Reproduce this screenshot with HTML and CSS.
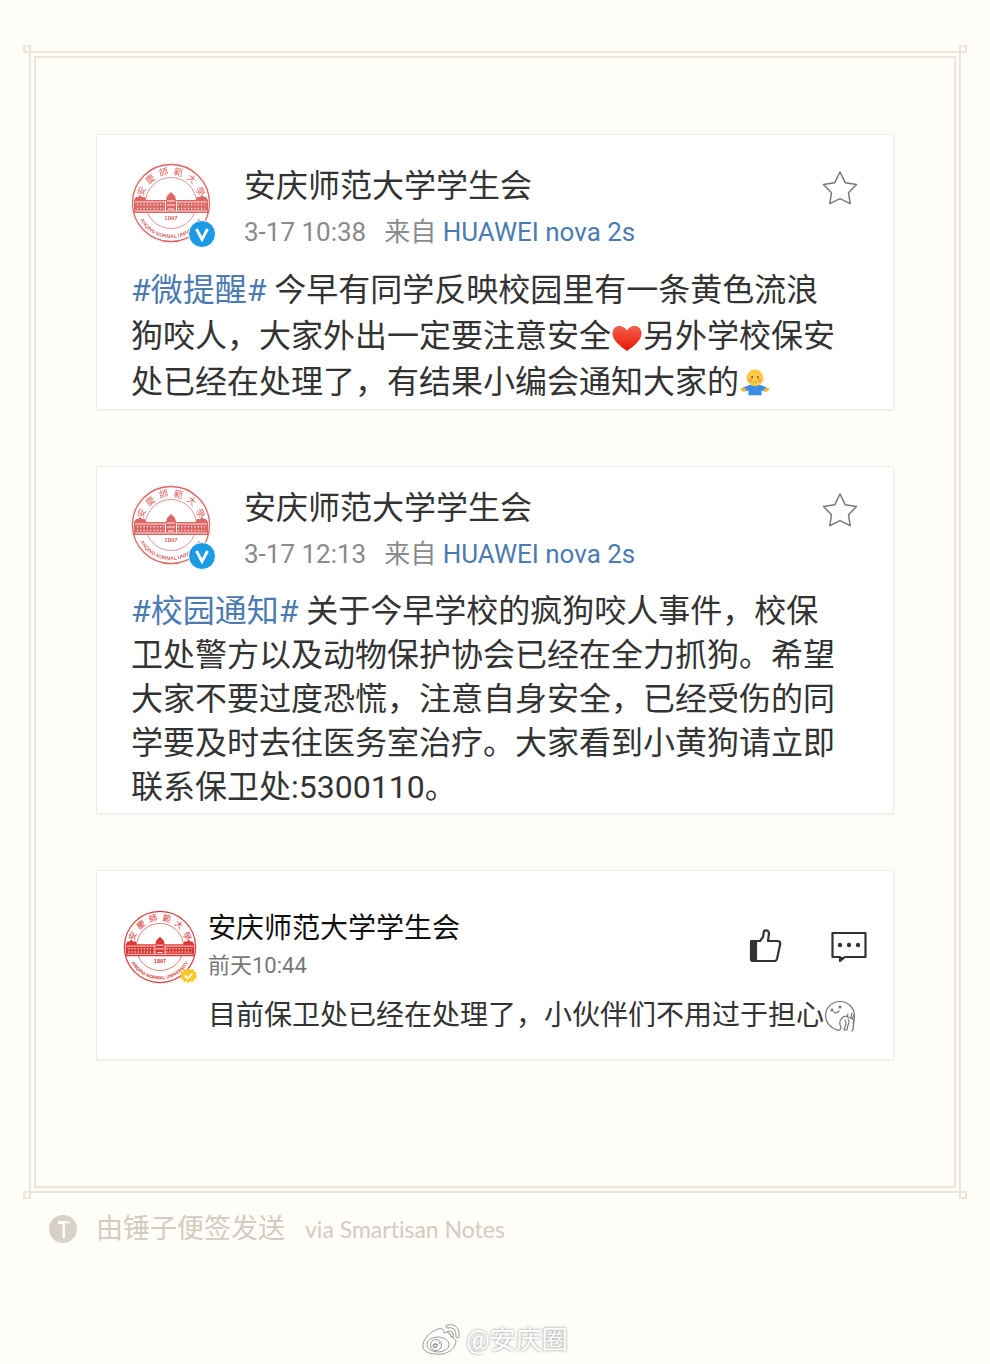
FILE: index.html
```html
<!DOCTYPE html>
<html lang="zh-CN">
<head>
<meta charset="utf-8">
<meta name="viewport" content="width=device-width, initial-scale=1">
<title>安庆师范大学学生会</title>
<link rel="stylesheet" href="styles.css">
</head>
<body>
<svg class="defs" aria-hidden="true">
  <defs>
    <path id="arc-top" d="M-28.500 0A28.500 28.500 0 0 1 28.500 0"/>
    <path id="arc-bottom" d="M-35 0A35 35 0 0 0 35 0"/>
    <symbol id="seal" viewBox="-40 -40 80 80">
      <circle r="39.5" fill="#fff"/>
      <circle r="38.500" fill="none" stroke="currentColor" stroke-width="1.3"/>
      <circle r="25.5" fill="none" stroke="currentColor" stroke-width=".7"/>
      <text class="seal-cn"><textPath href="#arc-top" startOffset="50%" text-anchor="middle">安&#8194;慶&#8194;師&#8194;範&#8194;大&#8194;學</textPath></text>
      <path d="M-37 -3l2-3h2l2-2 2 2h3l1 3h20l1-4 4-4 4 4 1 4h20l1-3h3l2-2 2 2h2l2 3V10h-74z" fill="currentColor"/>
      <path d="M-36 -1h30M6 -1h30M-36 8h72" stroke="#fff" stroke-width=".8"/>
      <path d="M-34 1.800h27M7 1.800h27M-34 5.500h27M7 5.500h27" stroke="#fff" stroke-width="1.600" stroke-dasharray="1 2.300"/>
      <path d="M-4 -2h8M-4 2h8M-3 6h6M-5.500 -2v10M5.500 -2v10" stroke="#fff" stroke-width=".9"/>
      <text class="seal-en"><textPath href="#arc-bottom" startOffset="50%" text-anchor="middle">ANQING NORMAL UNIVERSITY</textPath></text>
      <text class="seal-year" y="17" text-anchor="middle">1897</text>
    </symbol>
    <symbol id="star" viewBox="0 0 36 36">
      <path d="M18 2l5.200 10.700L34.500 14.500l-8 8.200 1.700 11L18 28.700 7.800 33.700l1.700-11-8-8.200L12.800 12.700z" fill="none" stroke="#777" stroke-width="1.500" stroke-linejoin="round"/>
    </symbol>
    <symbol id="vip" viewBox="0 0 28 28">
      <circle cx="14" cy="14" r="13.500" fill="#1b9be6" stroke="#fff"/>
      <path d="M8.500 9l5.500 10.500L19.500 9" fill="none" stroke="#fff" stroke-width="2.800"/>
    </symbol>
  </defs>
</svg>

<main class="frame">
  <i class="corner corner-tl"></i><i class="corner corner-tr"></i><i class="corner corner-bl"></i><i class="corner corner-br"></i>
  <div class="paper">
    <article class="card post">
      <header class="head">
        <div class="avatar"><svg class="seal seal-soft"><use href="#seal"/></svg><svg class="vip"><use href="#vip"/></svg></div>
        <div class="who">
          <h2 class="name">安庆师范大学学生会</h2>
          <p class="meta"><time>3-17 10:38</time><span>来自 <a href="#">HUAWEI nova 2s</a></span></p>
        </div>
        <button class="icon-button star" aria-label="收藏"><svg><use href="#star"/></svg></button>
      </header>
      <p class="text"><a href="#">#微提醒#</a> 今早有同学反映校园里有一条黄色流浪<br>狗咬人，大家外出一定要注意安全<svg class="emoji" viewBox="0 0 32 32" role="img" aria-label="心">
        <defs><linearGradient id="red" x2="0" y2="1"><stop stop-color="#f0604a"/><stop offset=".5" stop-color="#ef3b26"/><stop offset="1" stop-color="#df1709"/></linearGradient></defs>
        <path d="M16 29C9 24 1.500 18.500 1.500 11.500 1.500 2.500 12 1.500 16 8.500 20 1.500 30.500 2.500 30.500 11.500 30.500 18.500 23 24 16 29z" fill="url(#red)"/></svg>另外学校保安<br>处已经在处理了，有结果小编会通知大家的<svg class="emoji" viewBox="-1 1 34 34" role="img" aria-label="摊手">
        <path d="M10 19q6-2 12 0l7 3-2 4-4-1v5H9v-5l-4 1-2-4z" fill="#3b8de6"/>
        <path d="M5 26q-2 1-3-1-2-1-1-3l3 1 1-1 2 2zM27 26q2 1 3-1 2-1 1-3l-3 1-1-1-2 2z" fill="#f3bd37"/>
        <circle cx="16" cy="11.500" r="9" fill="#f9cc47"/>
        <circle cx="11" cy="14" r="2" fill="#f8a348"/><circle cx="21" cy="14" r="2" fill="#f8a348"/>
        <path d="M13 9.500v2.500M19 9.500v2.500" stroke="#885322" stroke-width="1.500"/><path d="M14 16h4" stroke="#e09a32"/></svg></p>
    </article>

    <article class="card post post-long">
      <header class="head">
        <div class="avatar"><svg class="seal seal-soft"><use href="#seal"/></svg><svg class="vip"><use href="#vip"/></svg></div>
        <div class="who">
          <h2 class="name">安庆师范大学学生会</h2>
          <p class="meta"><time>3-17 12:13</time><span>来自 <a href="#">HUAWEI nova 2s</a></span></p>
        </div>
        <button class="icon-button star" aria-label="收藏"><svg><use href="#star"/></svg></button>
      </header>
      <p class="text"><a href="#">#校园通知#</a> 关于今早学校的疯狗咬人事件，校保<br>卫处警方以及动物保护协会已经在全力抓狗。希望<br>大家不要过度恐慌，注意自身安全，已经受伤的同<br>学要及时去往医务室治疗。大家看到小黄狗请立即<br>联系保卫处:5300110。</p>
    </article>

    <article class="card comment">
      <header class="head">
        <div class="avatar"><svg class="seal"><use href="#seal"/></svg>
          <svg class="check" viewBox="0 0 18 18"><path d="M9 1l2 2 3-1 1 3 3 1-1 3 1 3-3 1-1 3-3-1-2 2-2-2-3 1-1-3-3-1 1-3-1-3 3-1 1-3 3 1z" fill="#fbc927"/><path d="M5 9l3 3 5-5" fill="none" stroke="#fff" stroke-width="2"/></svg></div>
        <div class="who">
          <h2 class="name">安庆师范大学学生会</h2>
          <p class="meta"><time>前天10:44</time></p>
        </div>
        <div class="actions">
          <button class="icon-button" aria-label="赞"><svg viewBox="0 0 36 36" fill="none" stroke="#333" stroke-width="2.200" stroke-linejoin="round"><path d="M3 13h9l3-4 1-6q4-2 5 2l-1 8h9q4 0 3 4l-3 14q-.5 2-3 2H5q-2 0-2-2V15q0-2 2-2z"/><path d="M3 14h5v18H4z" fill="#333"/></svg></button>
          <button class="icon-button" aria-label="评论"><svg viewBox="0 0 36 36" fill="none" stroke="#333" stroke-width="2.200" stroke-linejoin="round"><path d="M1.500 5h33v24H14l-5 4v-4H1.500z"/><path d="M8 29h6l-5 4z" fill="#333" stroke="none"/><g fill="#333" stroke="none"><circle cx="9" cy="17" r="2.200"/><circle cx="18" cy="17" r="2.200"/><circle cx="27" cy="17" r="2.200"/></g></svg></button>
        </div>
      </header>
      <p class="text">目前保卫处已经在处理了，小伙伴们不用过于担心<svg class="emoji" viewBox="0 0 32 32" role="img" aria-label="偷笑" fill="none" stroke="#777" stroke-width="1.200" stroke-linecap="round">
        <path d="M13 30C6 28 1.500 22 1.500 15.500 1.500 8 8 1.500 16 1.500S30.500 8 30.500 16c0 3-.5 5-1.500 7"/>
        <path d="M13 30q4 1 4-3-3-5 1-9 3-3 6-1l5 2q2 4 0 7 1 3-1 5M21 20q2 3 0 7l-1 3h3l1-5q2-3 0-6M24 14l-1 3M28 13l-1 4M30 15l-2 4"/><path d="M10 12q2 2 5-1"/><circle cx="8" cy="10" r=".9" fill="#333"/><circle cx="16" cy="7" r=".9" fill="#333"/></svg></p>
    </article>
  </div>
</main>

<footer class="credit">
  <svg class="credit-logo" viewBox="0 0 28 28"><circle cx="14" cy="14" r="14" fill="#d9d0c7"/><path d="M9 6h7q4 0 5 3-2-1-5-1v15q-1 1-2.500 0V9H9z" fill="#fffdf8"/></svg>
  <span class="credit-cn">由锤子便签发送</span>
  <span class="credit-en">via Smartisan Notes</span>
</footer>

<div class="watermark">
  <svg class="weibo" viewBox="0 0 38 34" fill="#fff" stroke="#999" stroke-width="1"><path d="M12 8q8-5 10 0v2q8-3 9 1l-1 3q6 3 3 8c-3 7-11 10-19 9C4 31 0 26 1 21 2 16 7 10 12 8z"/><ellipse cx="16" cy="21.500" rx="11" ry="7.500"/><circle cx="14" cy="22" r="5.500"/><path d="M12 24q-2-2 1-3 3 0 2 2-1 2-3 1zM17 20h1" stroke-width="1.500"/><path d="M25 2q10-2 12 7v5q-1 2-3 0 1-11-9-9-2-1 0-3z"/><path d="M26 8q6 0 5 6h-2q0-4-3-4-1-1 0-2z"/></svg>
  <span>@安庆圈</span>
</div>
</body>
</html>
```

FILE: styles.css
```css
* { box-sizing: border-box; }

body {
  margin: 0;
  padding: 51px 29px 0;
  background: #fffdf8;
  color: #333;
  font-family: Roboto, "Noto Sans CJK SC", sans-serif;
}

h2, p { margin: 0; font-weight: 400; }
a { color: #4b7bb0; text-decoration: none; }
svg { display: block; }

.defs { position: absolute; width: 0; height: 0; }

/* Double-ruled border with small squares at the corners */
.frame {
  position: relative;
  padding: 3px;
  border: 2px solid #ece5da;
}

.paper {
  display: flex;
  flex-direction: column;
  gap: 56px;
  padding: 76px 60px 126px;
  border: 2px solid #ece5da;
}

.corner {
  position: absolute;
  width: 8px;
  height: 8px;
  border: 2px solid #ece5da;
}
.corner-tl { top: -8px; left: -8px; }
.corner-tr { top: -8px; right: -8px; }
.corner-bl { bottom: -8px; left: -8px; }
.corner-br { bottom: -8px; right: -8px; }

.card {
  background: #fff;
  border: 1px solid #eeece7;
  border-radius: 2px;
  box-shadow: 0 1px 2px rgba(0, 0, 0, .06);
}

.head { display: flex; align-items: flex-start; }
.who { flex: 1; }

.avatar { position: relative; flex: none; }
.seal { width: 100%; height: 100%; color: #d93a36; overflow: visible; }
.seal-soft { color: #dc6764; filter: drop-shadow(0 0 1px #ddd); }
.seal-cn { font: 9px "Noto Sans CJK TC", "Noto Sans CJK SC", sans-serif; fill: currentColor; }
.seal-en { font: 700 5px "Liberation Sans", sans-serif; fill: currentColor; }
.seal-year { font: 700 6px "Liberation Sans", sans-serif; fill: currentColor; }

.vip {
  position: absolute;
  right: -5px;
  bottom: -5px;
  width: 28px;
  height: 28px;
}
.check {
  position: absolute;
  right: 0;
  bottom: 0;
  width: 17px;
  height: 17px;
}

.icon-button {
  padding: 0;
  border: 0;
  background: none;
  cursor: pointer;
}
.icon-button svg { width: 36px; height: 36px; }

.emoji { display: inline-block; width: 32px; height: 32px; vertical-align: -7px; }

/* Feed posts */
.post { padding: 28px 35px 4px 34px; }
.post .head { gap: 33px; }
.post .avatar { width: 80px; height: 80px; }
.post .name { font-size: 32px; line-height: 46px; }
.post .meta {
  display: flex;
  gap: 18px;
  color: #8a8a8a;
  font-size: 26px;
  line-height: 46px;
}
.post .text { margin-top: 12px; font-size: 32px; line-height: 46px; }
.star { margin-top: 7px; }

.post-long { padding-top: 18px; }
.post-long .text { line-height: 44px; }

/* Reply */
.comment { padding: 39px 26px 23px; }
.comment .head { gap: 11px; }
.comment .avatar { width: 74px; height: 74px; }
.comment .name { color: #111; font-size: 28px; line-height: 37px; }
.comment .meta { color: #777; font-size: 22px; line-height: 37px; }
.comment .text { margin: 12px 0 0 85px; font-size: 28px; line-height: 40px; }
.actions { display: flex; gap: 47px; padding-top: 18px; }

.credit {
  display: flex;
  align-items: center;
  padding: 16px 20px;
  color: #d5cbc1;
  line-height: 40px;
}
.credit-logo { width: 28px; height: 28px; margin-right: 19px; }
.credit-cn { margin-right: 20px; font-size: 27px; }
.credit-en { font-family: Lato, sans-serif; font-size: 23px; font-variant-ligatures: none; }

.watermark {
  display: flex;
  justify-content: center;
  align-items: center;
  gap: 6px;
  margin-top: 53px;
  color: #fff;
  font-size: 26px;
  line-height: 44px;
  text-shadow: 0 0 3px #888;
}
.weibo { width: 38px; height: 34px; }
```
